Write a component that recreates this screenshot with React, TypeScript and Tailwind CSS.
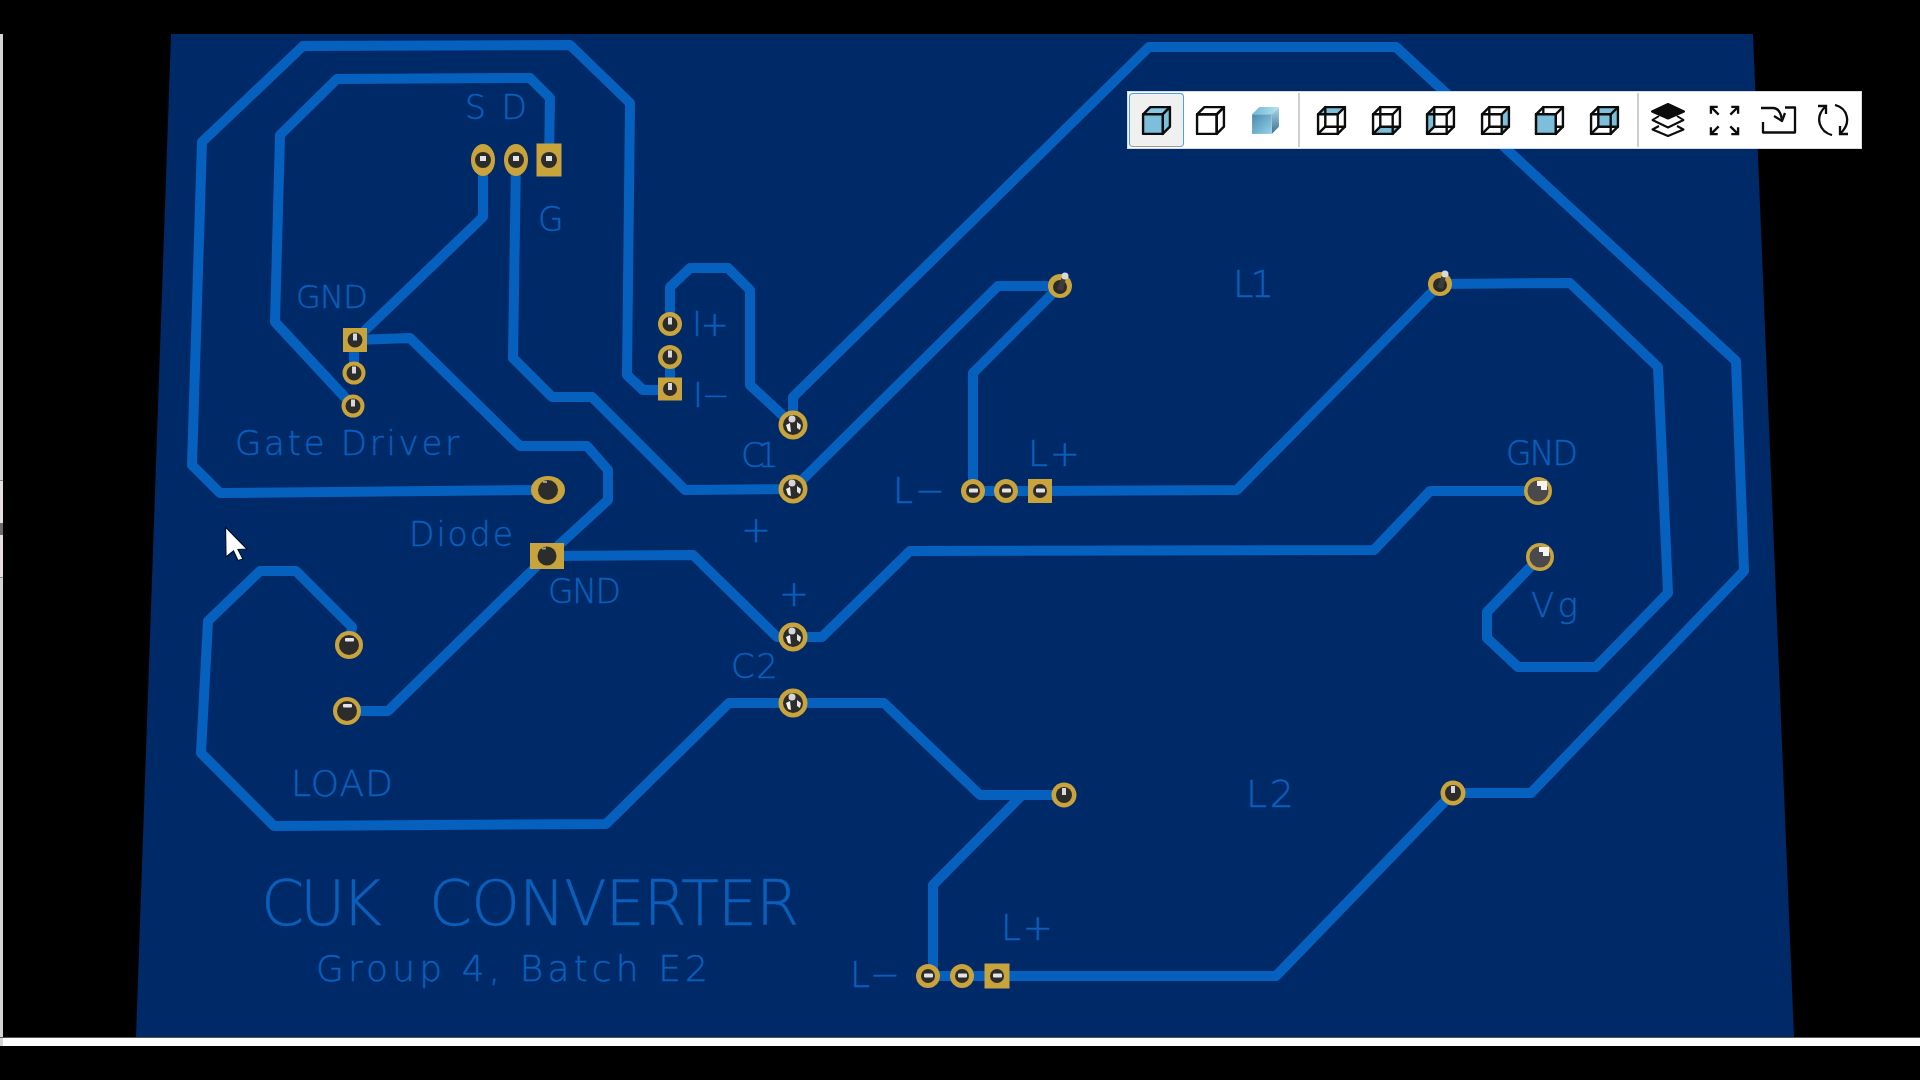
const TRACE = "#0561bd";
const GOLD = "#c9a43c";

// Traces, in page coordinates (the svg viewBox keeps them 1:1 with the picture)
const traces: string[] = [
  "548,490 220,493 192,465 202,142 303,46 570,45 630,103 627,375 643,390 670,390",
  "549,160 550,98 530,78 337,79 280,135 275,322 353,406",
  "483,160 483,217 355,340",
  "354,340 354,373",
  "355,340 410,338 520,446 587,446 608,470 608,500 547,556 388,711 347,711",
  "516,160 513,358 552,397 592,397 685,490 793,489 998,286 1060,286",
  "670,357 670,389",
  "670,325 670,287 690,268 728,268 750,290 750,385 793,425 793,397 1149,47 1396,47 1736,361 1744,571 1531,793 1453,793",
  "547,556 693,555 777,637 822,637 910,551 1374,550 1430,491 1538,491",
  "1060,286 973,373 973,491 1040,491 1237,490 1440,284 1570,283 1658,367 1668,593 1596,667 1518,667 1487,638 1487,612 1540,557",
  "349,645 352,627 296,571 260,571 208,621 201,753 274,826 606,824 729,703 884,703 980,795 1064,795",
  "1022,795 933,885 933,976 997,976 1276,976 1453,793",
];

type Glint = "dot" | "bar" | "upper" | "top" | "cluster" | "corner" | "pin" | "none";

type PadProps = {
  x: number;
  y: number;
  rx: number;
  ry: number;
  hole: number;
  square?: boolean;
  glint: Glint;
};

const pads: PadProps[] = [
  { x: 483, y: 160, rx: 12, ry: 16, hole: 8, glint: "dot" },
  { x: 516, y: 160, rx: 12, ry: 16, hole: 8, glint: "dot" },
  { x: 549, y: 160, rx: 12.5, ry: 16.5, hole: 8, square: true, glint: "dot" },
  { x: 355, y: 340, rx: 12, ry: 12, hole: 7.5, square: true, glint: "top" },
  { x: 354, y: 373, rx: 11.5, ry: 11.5, hole: 7.5, glint: "top" },
  { x: 353, y: 406, rx: 11.5, ry: 11.5, hole: 7.5, glint: "top" },
  { x: 548, y: 490, rx: 17, ry: 14, hole: 10, glint: "none" },
  { x: 670, y: 324, rx: 12, ry: 12, hole: 7.5, glint: "top" },
  { x: 670, y: 357, rx: 12, ry: 12, hole: 7.5, glint: "top" },
  { x: 670, y: 389, rx: 12, ry: 11.5, hole: 7, square: true, glint: "top" },
  { x: 793, y: 425, rx: 14.5, ry: 14.5, hole: 10, glint: "cluster" },
  { x: 793, y: 489, rx: 14.5, ry: 14.5, hole: 10, glint: "cluster" },
  { x: 793, y: 637, rx: 14.5, ry: 14.5, hole: 10, glint: "cluster" },
  { x: 793, y: 703, rx: 14.5, ry: 14.5, hole: 10, glint: "cluster" },
  { x: 547, y: 556, rx: 17, ry: 13, hole: 9.5, square: true, glint: "none" },
  { x: 349, y: 645, rx: 14, ry: 14, hole: 10, glint: "upper" },
  { x: 347, y: 711, rx: 14, ry: 14, hole: 10, glint: "upper" },
  { x: 973, y: 491, rx: 12, ry: 12, hole: 7, glint: "bar" },
  { x: 1006, y: 491, rx: 12, ry: 12, hole: 7, glint: "bar" },
  { x: 1040, y: 491, rx: 12, ry: 12, hole: 7, square: true, glint: "bar" },
  { x: 928, y: 976, rx: 12, ry: 12, hole: 7, glint: "bar" },
  { x: 962, y: 976, rx: 12, ry: 12, hole: 7, glint: "bar" },
  { x: 997, y: 976, rx: 12.5, ry: 12.5, hole: 7, square: true, glint: "bar" },
  { x: 1060, y: 286, rx: 12, ry: 12, hole: 7, glint: "pin" },
  { x: 1440, y: 284, rx: 12, ry: 12, hole: 7, glint: "pin" },
  { x: 1538, y: 491, rx: 14, ry: 14, hole: 10.5, glint: "corner" },
  { x: 1540, y: 557, rx: 14, ry: 14, hole: 10.5, glint: "corner" },
  { x: 1064, y: 795, rx: 12.5, ry: 12.5, hole: 8, glint: "top" },
  { x: 1453, y: 793, rx: 12.5, ry: 12.5, hole: 8, glint: "top" },
];

// Silk labels: x = left edge, y = baseline, w = ink width, size = font size
const labels = [
  { t: "S D", x: 465, y: 119, w: 62, size: 33 },
  { t: "G", x: 538, y: 231, w: 24, size: 33 },
  { t: "GND", x: 296, y: 308, w: 72, size: 32 },
  { t: "Gate Driver", x: 235, y: 455, w: 224, size: 34 },
  { t: "Diode", x: 409, y: 546, w: 104, size: 33 },
  { t: "GND", x: 548, y: 603, w: 73, size: 33 },
  { t: "I+", x: 692, y: 336, w: 37, size: 34 },
  { t: "I−", x: 693, y: 407, w: 37, size: 34 },
  { t: "C1", x: 741, y: 467, w: 38, size: 34 },
  { t: "+", x: 741, y: 542, w: 29, size: 36 },
  { t: "+", x: 779, y: 606, w: 29, size: 36 },
  { t: "C2", x: 731, y: 678, w: 47, size: 34 },
  { t: "L1", x: 1233, y: 297, w: 41, size: 37 },
  { t: "L+", x: 1028, y: 466, w: 52, size: 36 },
  { t: "L−", x: 893, y: 503, w: 52, size: 36 },
  { t: "GND", x: 1506, y: 465, w: 72, size: 33 },
  { t: "Vg", x: 1531, y: 617, w: 47, size: 34 },
  { t: "L2", x: 1246, y: 807, w: 48, size: 38 },
  { t: "LOAD", x: 291, y: 796, w: 102, size: 36 },
  { t: "CUK", x: 261, y: 925, w: 121, size: 62 },
  { t: "CONVERTER", x: 429, y: 925, w: 370, size: 62 },
  { t: "Group 4, Batch E2", x: 316, y: 981, w: 392, size: 36 },
  { t: "L+", x: 1001, y: 940, w: 52, size: 36 },
  { t: "L−", x: 850, y: 987, w: 50, size: 36 },
];

function Pad({ x, y, rx, ry, hole, square, glint }: PadProps) {
  return (
    <g>
      {square ? (
        <rect x={x - rx} y={y - ry} width={rx * 2} height={ry * 2} fill={GOLD} />
      ) : (
        <ellipse cx={x} cy={y} rx={rx} ry={ry} fill={GOLD} />
      )}
      {glint === "pin" ? (
        <>
          <circle cx={x} cy={y + 1} r={hole} fill="#2a2a2a" />
          <path d={`M${x - 3} ${y + 3} L${x + 2} ${y - 9} L${x + 6} ${y - 8} L${x + 3} ${y + 5} Z`} fill="#3c3c3c" />
          <circle cx={x + 5} cy={y - 10} r={3.5} fill="#d9d9d9" />
        </>
      ) : (
        <circle cx={x} cy={y} r={hole} fill={glint === "corner" ? "#4a4a4c" : "#2c2c2c"} />
      )}
      {glint === "dot" && <rect x={x - 3} y={y - 4} width={6} height={5} fill="#e4e4e4" />}
      {glint === "bar" && <rect x={x - 4} y={y - 2.5} width={9} height={4} rx={1} fill="#e4e4e4" />}
      {glint === "upper" && <rect x={x - 4} y={y - 7} width={9} height={3.5} rx={1} fill="#e4e4e4" />}
      {glint === "top" && <rect x={x - 2} y={y - hole + 1} width={4} height={7} fill="#d8d8d8" />}
      {glint === "none" && <rect x={x - 5} y={y - hole + 1} width={4} height={2} fill="#9a9a9a" />}
      {glint === "corner" && <path d={`M${x - 1} ${y - 10} h10 v9 h-6 v-4 h-4 z`} fill="#f4f4f4" />}
      {glint === "cluster" && (
        <>
          <circle cx={x - 1} cy={y - 6} r={3.5} fill="#d6d6d6" />
          <path d={`M${x - 7} ${y} L${x - 3} ${y - 2} L${x - 2} ${y + 7} L${x - 5} ${y + 6} Z`} fill="#f2f2f2" />
          <path d={`M${x + 4} ${y - 3} L${x + 8} ${y} L${x + 7} ${y + 5} L${x + 4} ${y + 3} Z`} fill="#e6e6e6" />
        </>
      )}
    </g>
  );
}

function Board() {
  return (
    <svg viewBox="3 34 1917 1003" className="absolute inset-0 h-full w-full">
      <polygon points="171,34 1753,34 1794,1037 136,1037" fill="#002967" />
      {traces.map((points, i) => (
        <polyline
          key={i}
          points={points}
          fill="none"
          stroke={TRACE}
          strokeWidth={10}
          strokeLinejoin="round"
          strokeLinecap="round"
        />
      ))}
      {labels.map((l, i) => (
        <text
          key={i}
          x={l.x}
          y={l.y}
          fontSize={l.size}
          textLength={l.w}
          lengthAdjust="spacing"
          className="fill-[#0a5fbb] stroke-[#0a5fbb] stroke-[0.4px] [font-family:'DejaVu_Sans_ExtraLight','DejaVu_Sans',sans-serif] font-extralight"
        >
          {l.t}
        </text>
      ))}
      {pads.map((p, i) => (
        <Pad key={i} {...p} />
      ))}
      {/* mouse pointer */}
      <path d="M225.5 527 L247 549 L238 549.5 L243 559 L238 560.500 L233.500 551 L226 557 Z" fill="#fff" stroke="#00102c" strokeWidth={1.2} />
    </svg>
  );
}

const BLUE = "#7dbedb";
const faces: Record<string, string> = {
  top: "2,9 9,2 28,2 21,9",
  bottom: "2,28 9,21 28,21 21,28",
  left: "2,9 9,2 9,21 2,28",
  right: "21,9 28,2 28,21 21,28",
  front: "2,9 21,9 21,28 2,28",
  back: "9,2 28,2 28,21 9,21",
};

function Cube({ face, solid }: { face?: string; solid?: boolean }) {
  return (
    <svg viewBox="0 0 30 30" className="h-[31px] w-[31px]" fill="none" stroke="#0c0c0c" strokeWidth={2.3} strokeLinejoin="round" strokeLinecap="round">
      {solid ? (
        <>
          <polygon points={faces.top} fill="#87c7e2" />
          <polygon points={faces.right} fill={BLUE} />
          <polygon points={faces.front} fill={BLUE} />
        </>
      ) : face ? (
        <>
          <polygon points={faces[face]} fill={BLUE} stroke="none" />
          <rect x={9} y={2} width={19} height={19} />
          <rect x={2} y={9} width={19} height={19} />
          <path d="M2 9 L9 2 M21 9 L28 2 M2 28 L9 21 M21 28 L28 21" />
          {/* the front face hides the edges behind it */}
          {face === "front" && <polygon points={faces.front} fill={BLUE} />}
        </>
      ) : (
        <>
          <polygon points={faces.top} />
          <polygon points={faces.right} />
          <polygon points={faces.front} />
        </>
      )}
    </svg>
  );
}

function RenderedCube() {
  return (
    <svg viewBox="0 0 30 30" className="h-[31px] w-[31px]">
      <defs>
        <linearGradient id="cube-front" x1="0" y1="0" x2="1" y2="1">
          <stop offset="0" stopColor="#4b8aae" />
          <stop offset="1" stopColor="#93d2e8" />
        </linearGradient>
        <linearGradient id="cube-side" x1="0" y1="0" x2="0" y2="1">
          <stop offset="0" stopColor="#a9d8ea" />
          <stop offset="1" stopColor="#3f6f90" />
        </linearGradient>
        <linearGradient id="cube-top" x1="0" y1="0" x2="1" y2="0">
          <stop offset="0" stopColor="#6fb6d4" />
          <stop offset="1" stopColor="#b5e3f2" />
        </linearGradient>
      </defs>
      <polygon points={faces.top} fill="url(#cube-top)" />
      <polygon points={faces.right} fill="url(#cube-side)" />
      <polygon points={faces.front} fill="url(#cube-front)" />
    </svg>
  );
}

function LayersIcon() {
  return (
    <svg viewBox="0 0 34 34" className="h-[34px] w-[34px]" fill="none" stroke="#0c0c0c" strokeWidth={2} strokeLinejoin="round">
      <path d="M17 1 L33 8.500 L17 15.500 L1 8.500 Z" fill="#0c0c0c" />
      <path d="M8 13 L1.500 17 L17 24.500 L32.500 17 L26 13" />
      <path d="M8 23 L1.500 26.500 L17 33 L32.500 26.500 L26 23" />
    </svg>
  );
}

function FitIcon() {
  return (
    <svg viewBox="0 0 34 34" className="h-[33px] w-[33px]" fill="none" stroke="#0c0c0c" strokeWidth={2.4} strokeLinejoin="miter">
      <path d="M3 10 V3 H10 M3 3 L11 11" />
      <path d="M24 3 H31 V10 M31 3 L23 11" />
      <path d="M3 24 V31 H10 M3 31 L11 23" />
      <path d="M24 31 H31 V24 M31 31 L23 23" />
    </svg>
  );
}

function ZoomSelectionIcon() {
  return (
    <svg viewBox="0 0 36 28" className="h-[28px] w-[36px]" fill="none" stroke="#0c0c0c" strokeWidth={2.3} strokeLinejoin="round">
      <path d="M24 1.500 H34 V26.500 H2 V16" />
      <path d="M0 2 H12 C17 2 20 7 21 14" />
      <path d="M13 10 L21 15 L24 7" />
    </svg>
  );
}

function RotateIcon() {
  return (
    <svg viewBox="0 0 34 32" className="h-[32px] w-[34px]" fill="none" stroke="#0c0c0c" strokeWidth={2.3} strokeLinejoin="miter">
      <path d="M16 31 C4 28 -2 14 9 3" />
      <path d="M2 2 H10 V10" />
      <path d="M19 1 C31 4 36 18 25 29" />
      <path d="M32 30 H24 V22" />
    </svg>
  );
}

function ToolButton({ children, active, className }: { children: React.ReactNode; active?: boolean; className?: string }) {
  return (
    <div
      className={`flex h-full w-[54.5px] shrink-0 items-center justify-center rounded-[4px] ${
        active ? "border border-[#4aa3ea] border-b-[#9a9a9a] bg-[#f0f0f0]" : ""
      } ${className ?? ""}`}
    >
      {children}
    </div>
  );
}

function Toolbar() {
  return (
    <div className="absolute left-[1124px] top-[57px] flex h-[58px] w-[735px] items-center border border-[#d5dbe4] bg-white py-px pl-[1px]">
      <ToolButton active>
        <Cube solid />
      </ToolButton>
      <ToolButton>
        <Cube />
      </ToolButton>
      <ToolButton>
        <RenderedCube />
      </ToolButton>
      <div className="ml-[5px] mr-[5px] h-[54px] w-[2px] bg-[#cfcfcf]" />
      <ToolButton>
        <Cube face="top" />
      </ToolButton>
      <ToolButton>
        <Cube face="bottom" />
      </ToolButton>
      <ToolButton>
        <Cube face="left" />
      </ToolButton>
      <ToolButton>
        <Cube face="right" />
      </ToolButton>
      <ToolButton>
        <Cube face="front" />
      </ToolButton>
      <ToolButton>
        <Cube face="back" />
      </ToolButton>
      <div className="ml-[5px] mr-[2px] h-[54px] w-[2px] bg-[#cfcfcf]" />
      <ToolButton>
        <LayersIcon />
      </ToolButton>
      <ToolButton className="ml-[2px]">
        <FitIcon />
      </ToolButton>
      <ToolButton>
        <ZoomSelectionIcon />
      </ToolButton>
      <ToolButton>
        <RotateIcon />
      </ToolButton>
    </div>
  );
}

export default function App() {
  return (
    <div className="flex h-[1080px] w-full flex-col overflow-hidden bg-black">
      <div className="h-[34px] shrink-0" />
      <div className="flex h-[1003px] shrink-0">
        {/* left window edge */}
        <div className="flex w-[3px] shrink-0 flex-col bg-[#d4d4d4]">
          <div className="h-[446px]" />
          <div className="flex h-[98px] items-center border-y border-[#8a8a8a] bg-[#e6dfe0]">
            <div className="h-[12px] w-[3px] bg-[#6f6a6c]" />
          </div>
        </div>
        <div className="relative flex-1">
          <Board />
          <Toolbar />
        </div>
      </div>
      <div className="h-px shrink-0 bg-[#555555]" />
      <div className="flex h-[8px] shrink-0">
        <div className="w-[3px] bg-[#d4d4d4]" />
        <div className="flex-1 bg-white" />
      </div>
    </div>
  );
}
